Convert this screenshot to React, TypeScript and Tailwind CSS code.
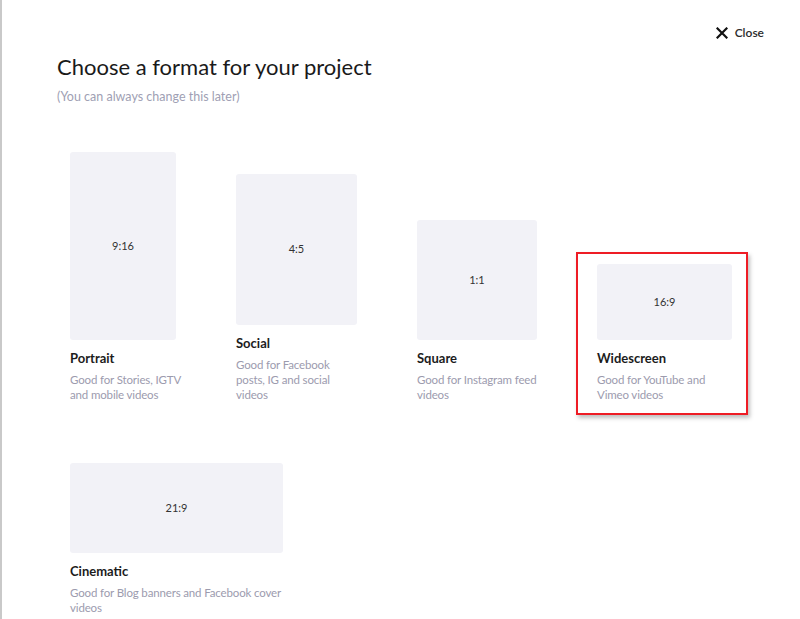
import React from 'react'

interface Format {
  name: string
  ratio: string
  w: number
  h: number
  lines: string[]
  highlight?: boolean
}

const topRow: Format[] = [
  { name: 'Portrait', ratio: '9:16', w: 106, h: 188, lines: ['Good for Stories, IGTV', 'and mobile videos'] },
  { name: 'Social', ratio: '4:5', w: 121, h: 151, lines: ['Good for Facebook', 'posts, IG and social', 'videos'] },
  { name: 'Square', ratio: '1:1', w: 120, h: 120, lines: ['Good for Instagram feed', 'videos'] },
  { name: 'Widescreen', ratio: '16:9', w: 135, h: 76, lines: ['Good for YouTube and', 'Vimeo videos'], highlight: true },
]

const bottomRow: Format[] = [
  { name: 'Cinematic', ratio: '21:9', w: 213, h: 90, lines: ['Good for Blog banners and Facebook cover', 'videos'] },
]

function FormatCard({ format }: { format: Format }) {
  return (
    <div className="relative flex flex-col" style={{ width: format.w }}>
      {/* annotation box round the picked format */}
      {format.highlight && (
        <div className="pointer-events-none absolute -left-[21px] -right-[16px] -top-[12px] -bottom-[13px] border-2 border-[#ee1c25] shadow-[2px_3px_4px_rgba(0,0,0,0.25)]" />
      )}
      <div
        className="flex items-center justify-center rounded-[3px] bg-[#f2f2f7] text-[11px] text-[#333]"
        style={{ height: format.h }}
      >
        {format.ratio}
      </div>
      <div className="mt-[9px] text-[13px] font-bold leading-[18px] text-[#1c1c1c]">{format.name}</div>
      <div className="mt-[5px] text-[11.5px] leading-[15px] tracking-[-0.15px] text-[#9c9bae] whitespace-nowrap">
        {format.lines.map((l, i) => (
          <div key={i}>{l}</div>
        ))}
      </div>
    </div>
  )
}

export default function App() {
  return (
    <div className="min-h-[619px] w-full bg-white border-l-2 border-[#c9c9c9] font-['Lato','Noto_Sans',sans-serif] overflow-hidden">
      <div className="flex justify-end pt-[25px] pr-[36px]">
        <button className="flex items-center gap-[7px] text-[12px] font-semibold text-[#2b2b2b] leading-[16px]">
          <svg width="12" height="12" viewBox="0 0 12 12" fill="none" stroke="#111" strokeWidth="2.2" strokeLinecap="square">
            <path d="M1.5 1.5l9 9M10.5 1.5l-9 9" />
          </svg>
          Close
        </button>
      </div>

      <div className="pl-[55px]">
        <h1 className="mt-[10px] text-[22px] leading-[32px] text-[#1a1a1a]">Choose a format for your project</h1>
        <p className="mt-[5px] text-[12.5px] leading-[18px] text-[#a09fb4]">(You can always change this later)</p>
      </div>

      <div className="mt-[46px] flex flex-col gap-[61px] pl-[68px]">
        <div className="flex items-end gap-[60px]">
          {topRow.map(f => (
            <FormatCard key={f.name} format={f} />
          ))}
        </div>
        <div className="flex items-end gap-[60px]">
          {bottomRow.map(f => (
            <FormatCard key={f.name} format={f} />
          ))}
        </div>
      </div>
    </div>
  )
}
